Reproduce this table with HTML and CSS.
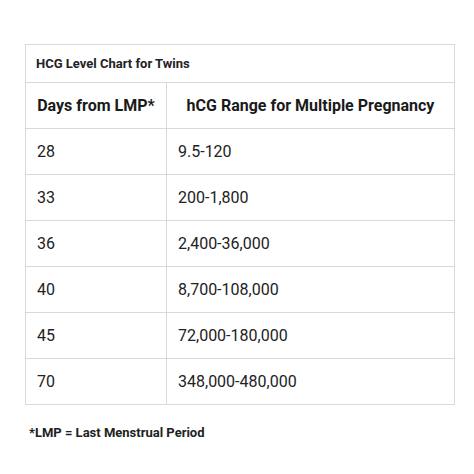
FILE: index.html
```html
<!DOCTYPE html>
<html>
<head>
<meta charset="utf-8">
<link rel="stylesheet" href="styles.css">
</head>
<body>
<div class="page">
  <table class="chart">
    <colgroup><col class="col1"><col class="col2"></colgroup>
    <tr class="title-row"><td colspan="2">HCG Level Chart for Twins</td></tr>
    <tr class="head-row"><th>Days from LMP*</th><th>hCG Range for Multiple Pregnancy</th></tr>
    <tr><td>28</td><td>9.5-120</td></tr>
    <tr><td>33</td><td>200-1,800</td></tr>
    <tr><td>36</td><td>2,400-36,000</td></tr>
    <tr><td>40</td><td>8,700-108,000</td></tr>
    <tr><td>45</td><td>72,000-180,000</td></tr>
    <tr><td>70</td><td>348,000-480,000</td></tr>
  </table>
  <p class="note">*LMP = Last Menstrual Period</p>
</div>
</body>
</html>
```
FILE: styles.css
```css
html, body {
  margin: 0;
  padding: 0;
  background: #fff;
}
body {
  font-family: Roboto, "Liberation Sans", sans-serif;
  color: #222;
}
.page {
  padding: 44px 20px 0 25px;
}
.chart {
  width: 430px;
  table-layout: fixed;
  border-collapse: collapse;
  border: 1.5px solid #d9d9d9;
}
.col1 {
  width: 141px;
}
.chart td, .chart th {
  border: 1.5px solid #d9d9d9;
  padding: 0 0 0 11px;
  text-align: left;
  height: 45px;
  font-size: 16px;
  font-weight: 400;
  color: #222;
  white-space: nowrap;
}
.chart th {
  font-weight: 700;
  color: #1a1a1a;
  text-align: center;
  padding: 0;
}
.title-row td {
  height: 37px;
  font-size: 13px;
  font-weight: 700;
  padding-left: 10px;
}
.note {
  margin: 20px 0 0 4px;
  font-size: 13px;
  font-weight: 700;
  color: #222;
}
```
